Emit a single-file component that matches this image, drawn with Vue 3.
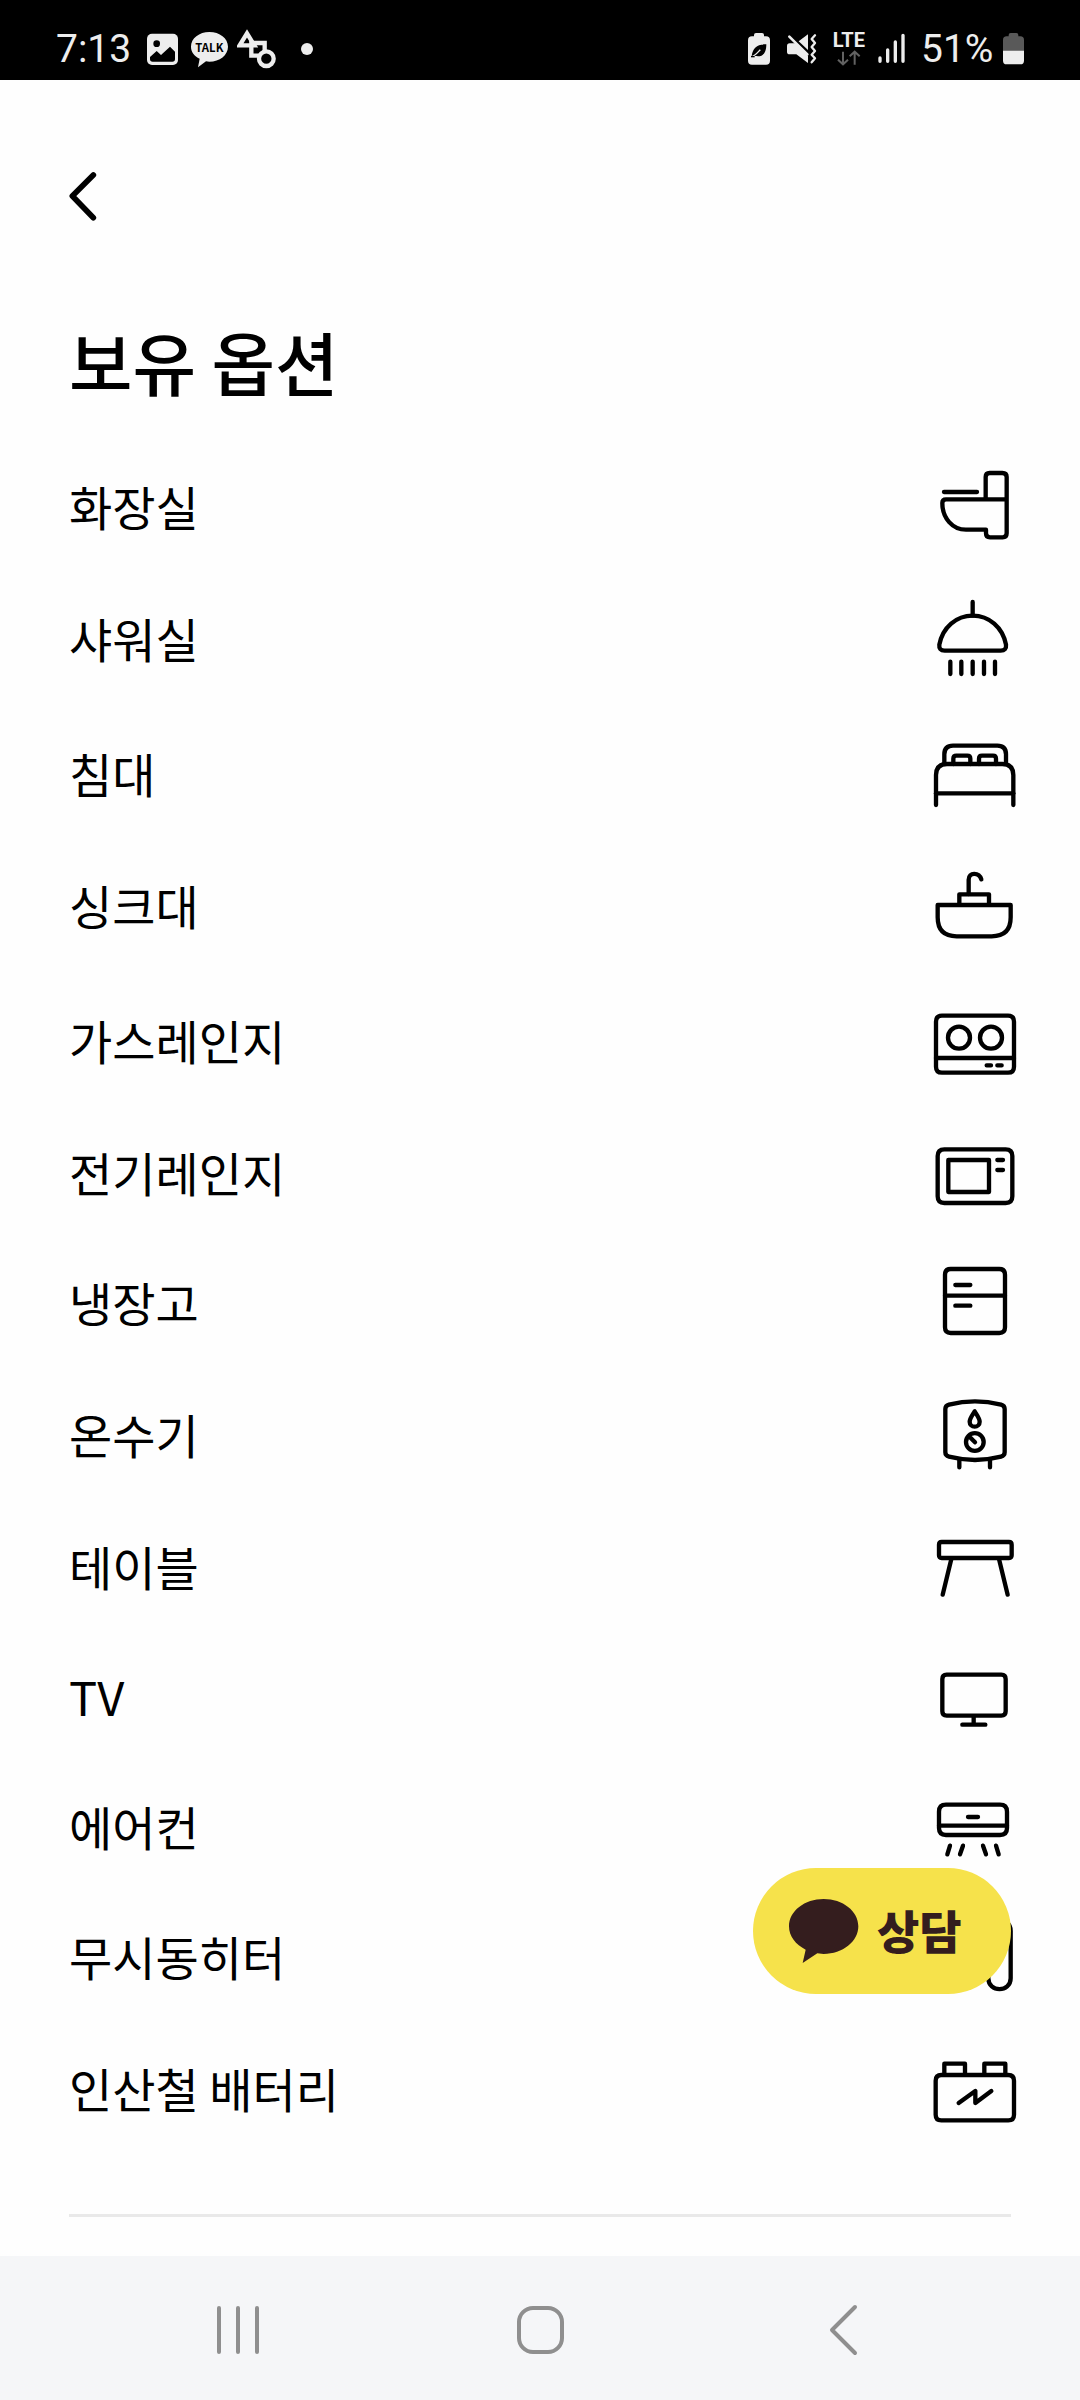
<script setup>
// Each icon is a 90x96 px window (3 drawing units per pixel); `x` and `y` are its viewBox origin.
const options = [
  { name: '화장실', x: 90, y: 60, spacing: 'tight', paths: [
    'M132 156H231',
    'M257 177V111Q257 99 269 99H307Q320 99 320 111V280Q320 292 308 292H270Q258 292 258 280V269H198C158 269 127 235 127 189Q127 178 138 178H320'
  ] },
  { name: '샤워실', x: 90, y: 456, spacing: 'normal', paths: [
    'M218 486V527',
    'M118 614C128 562 169 527 218 527S308 562 318 614Q320 632 302 632H134Q116 632 118 614Z',
    'M151 665V702M184 665V702M218 665V702M252 665V702M285 665V702'
  ] },
  { name: '침대', x: 90, y: 861, spacing: 'wide', paths: [
    'M133 971V943Q133 917 159 917H292Q318 917 318 943V971',
    'M108 1095V1005Q108 972 141 972H307Q340 972 340 1005V1095',
    'M108 1060H340',
    'M160 972V956Q160 947 169 947H202Q211 947 211 956V972M237 972V956Q237 947 246 947H279Q288 947 288 956V972'
  ] },
  { name: '싱크대', x: 90, y: 57, spacing: 'normal', paths: [
    'M206 162V119C206 96 237 96 244 118',
    'M178 194V163H267V194',
    'M113 195H332V232Q332 289 275 289H170Q113 289 113 232Z'
  ] },
  { name: '가스레인지', x: 90, y: 462, spacing: 'wide', paths: [
    'M126 527H324Q342 527 342 545V680Q342 698 324 698H126Q108 698 108 680V545Q108 527 126 527Z',
    'M108 654H342',
    'M144 593a33 33 0 1 0 66 0a33 33 0 1 0-66 0M240 593a33 33 0 1 0 66 0a33 33 0 1 0-66 0',
    'M260 676H273M292 676H305'
  ] },
  { name: '전기레인지', x: 90, y: 858, spacing: 'normal', paths: [
    'M133 928H317Q337 928 337 948V1069Q337 1089 317 1089H133Q113 1089 113 1069V948Q113 928 133 928Z',
    'M145 960H267V1056H145Z',
    'M292 960H309M292 990H309'
  ] },
  { name: '냉장고', x: 90, y: 48, spacing: 'tight', paths: [
    'M152 87H298Q315 87 315 104V262Q315 279 298 279H152Q135 279 135 262V104Q135 87 152 87Z',
    'M135 167H315M166 135H211M166 197H211'
  ] },
  { name: '온수기', x: 90, y: 444, spacing: 'normal', paths: [
    'M136 507Q136 497 147 494Q225 474 303 494Q314 497 314 507V637Q314 647 303 650Q225 670 147 650Q136 647 136 637Z',
    'M178 658V682M270 658V682',
    'M224 514C218 524 209 535 209 545A15 15 0 0 0 239 545C239 535 230 524 224 514Z',
    'M198 606a26 26 0 1 0 53 0a26 26 0 1 0-53 0M207 589L225 607'
  ] },
  { name: '테이블', x: 90, y: 840, spacing: 'normal', paths: [
    'M125 906H327Q335 906 335 914V946Q335 954 327 954H125Q117 954 117 946V914Q117 906 125 906Z',
    'M154 957L128 1064M297 957L323 1064'
  ] },
  { name: 'TV', x: 600, y: 30, spacing: 'tight', paths: [
    'M650 104H814Q827 104 827 117V214Q827 227 814 227H650Q637 227 637 214V117Q637 104 650 104Z',
    'M731 230V254M697 254H766'
  ] },
  { name: '에어컨', x: 600, y: 420, spacing: 'tight', paths: [
    'M648 494H810Q831 494 831 515V564Q831 585 810 585H648Q627 585 627 564V515Q627 494 648 494Z',
    'M627 557H831M714 531H744',
    'M660 617L652 643M699 617L690 643M759 617L768 643M798 617L806 643'
  ] },
  { name: '무시동히터', x: 600, y: 810, spacing: 'tight', paths: [
    'M775 1015V873C775 829 842 829 842 873V1015C842 1058 775 1058 775 1015Z'
  ] },
  { name: '인산철 배터리', x: 600, y: 1206, spacing: 'normal', paths: [
    'M634 1305H835Q852 1305 852 1322V1424Q852 1441 835 1441H634Q617 1441 617 1424V1322Q617 1305 634 1305Z',
    'M643 1303V1271H705V1303M763 1303V1271H826V1303',
    'M686 1389L736 1353V1389L784 1353'
  ] }
]
</script>

<template>
  <div class="screen">
    <div class="status">
      <div class="status-side">
        <span class="clock">7:13</span>
        <svg width="44" height="42" viewBox="441 84 132 126" aria-hidden="true">
          <rect x="441" y="101" width="93" height="94" rx="15" fill="#ededed" />
          <circle cx="470" cy="131" r="10" fill="#000" />
          <path d="M450 171L470 153L483 165L510 140L525 155V177Q525 185 517 185H458Q450 185 450 177Z" fill="#000" />
        </svg>
        <svg width="46" height="42" viewBox="573 84 138 126" aria-hidden="true">
          <path d="M628 96C659 96 684 115 684 140S659 185 628 185L618 184L594 202L599 176C583 168 573 156 573 140C573 115 598 96 628 96Z" fill="#ededed" />
          <text class="talk" x="628" y="155" text-anchor="middle">TALK</text>
        </svg>
        <svg width="64" height="42" viewBox="711 84 192 126" aria-hidden="true">
          <g fill="none" stroke="#ededed" stroke-width="13">
            <path d="M741 100L719 136H763Z" />
            <path d="M754 129H794V167H754Z" />
            <circle cx="799" cy="176" r="22" fill="#000" />
          </g>
        </svg>
        <svg width="12" height="42" viewBox="903 84 36 126" aria-hidden="true">
          <circle cx="921" cy="147" r="18" fill="#ededed" />
        </svg>
      </div>
      <div class="status-side">
        <svg width="39" height="42" viewBox="87 84 117 126" aria-hidden="true">
          <path d="M105 109V105Q105 99 111 99H129Q135 99 135 105V109H141Q153 109 153 121V182Q153 194 141 194H99Q87 194 87 182V121Q87 109 99 109Z" fill="#ededed" />
          <path d="M98 168C102 141 115 133 142 133C142 160 132 171 110 168Z" fill="#000" />
          <path d="M96 170C108 169 115 158 124 149" fill="none" stroke="#ededed" stroke-width="4" />
          <path d="M96 170H107" stroke="#000" stroke-width="4" />
        </svg>
        <svg width="46" height="42" viewBox="204 84 138 126" aria-hidden="true">
          <path d="M204 138Q204 130 212 130H229L267 167V189L232 163H212Q204 163 204 155ZM239 124L267 103V150Z" fill="#ededed" />
          <path d="M211 110L265 163" stroke="#ededed" stroke-width="8" stroke-linecap="round" />
          <path d="M288 106L278 117L288 129L278 141L288 153L278 164L288 175L278 187" fill="none" stroke="#ededed" stroke-width="7" stroke-linecap="round" stroke-linejoin="round" />
        </svg>
        <svg width="45" height="42" viewBox="342 84 135 126" aria-hidden="true">
          <text class="lte" x="341" y="142">LTE</text>
          <path d="M372 155V193M357 179L372 193L387 179M407 194V156M392 169L407 155L422 169" fill="none" stroke="#626262" stroke-width="6" />
        </svg>
        <svg width="43" height="42" viewBox="477 84 129 126" aria-hidden="true">
          <path d="M483 174V184M506 150V184M529 126V184M552 106V184" stroke="#ededed" stroke-width="10" stroke-linecap="round" />
        </svg>
        <span class="percent">51%</span>
        <svg width="21" height="42" viewBox="849 84 63 126" aria-hidden="true">
          <path d="M866 109V105Q866 99 872 99H889Q895 99 895 105V109H901Q912 109 912 120V153H849V120Q849 109 860 109Z" fill="#595959" />
          <path d="M849 152H912V182Q912 193 901 193H860Q849 193 849 182Z" fill="#ededed" />
        </svg>
      </div>
    </div>

    <main class="content">
      <button class="back" type="button" aria-label="뒤로">
        <svg width="30" height="60" viewBox="207 497 90 180" aria-hidden="true">
          <path d="M280 524L217 587L280 652" fill="none" stroke="#000" stroke-width="17" stroke-linecap="round" stroke-linejoin="round" />
        </svg>
      </button>
      <h1>보유 옵션</h1>
      <ul class="options">
        <li v-for="option in options" :key="option.name" :class="['option', option.spacing]">
          <span class="name">{{ option.name }}</span>
          <svg class="icon" width="90" height="96" :viewBox="`${option.x} ${option.y} 270 288`" aria-hidden="true">
            <path v-for="d in option.paths" :key="d" :d="d" />
          </svg>
        </li>
      </ul>
      <hr />
    </main>

    <button class="chat" type="button">
      <svg width="70" height="64" viewBox="177 777 210 192" aria-hidden="true">
        <path d="M281 777C338 777 385 813 385 859S338 942 281 942L262 940L218 969L227 929C197 914 177 889 177 859C177 813 224 777 281 777Z" fill="#341d1e" />
      </svg>
      <span class="chat-label">상담</span>
    </button>

    <nav class="system-nav">
      <button type="button" aria-label="최근 앱">
        <svg width="52" height="52" viewBox="0 0 52 52" aria-hidden="true">
          <path d="M7 4V48M26 4V48M45 4V48" />
        </svg>
      </button>
      <button type="button" aria-label="홈">
        <svg width="52" height="52" viewBox="0 0 52 52" aria-hidden="true">
          <rect x="5" y="4" width="43" height="44" rx="14" />
        </svg>
      </button>
      <button type="button" aria-label="뒤로">
        <svg width="52" height="52" viewBox="0 0 52 52" aria-hidden="true">
          <path d="M39 3L16 26L39 49" />
        </svg>
      </button>
    </nav>
  </div>
</template>

<style>
body {
  margin: 0;
  background: #fefefe;
}
</style>

<style scoped>
.screen {
  display: flex;
  flex-direction: column;
  min-height: 100vh;
  background: #fefefe;
  color: #000;
  font-family: "Noto Sans CJK KR", sans-serif;
}
button {
  padding: 0;
  border: 0;
  background: none;
  color: inherit;
  font: inherit;
  cursor: pointer;
}
svg {
  display: block;
  flex: none;
}
.status {
  display: flex;
  justify-content: space-between;
  box-sizing: border-box;
  height: 80px;
  padding: 28px 56px 0;
  background: #000;
  color: #ededed;
  font-family: Roboto, sans-serif;
  font-size: 39px;
  line-height: 42px;
}
.status-side {
  display: flex;
}
.clock {
  width: 91px;
}
.percent {
  width: 82px;
}
.talk {
  font-family: "Noto Sans CJK KR", sans-serif;
  font-size: 34px;
  font-weight: 700;
}
.lte {
  fill: #ededed;
  font-size: 60px;
  font-weight: 700;
}
.content {
  padding: 86px 69px 38px;
}
.back {
  display: block;
}
h1 {
  margin: 85px 0 32px;
  font-size: 69px;
  font-weight: 500;
  line-height: 100px;
}
.options {
  margin: 0;
  padding: 0;
  list-style: none;
}
.option {
  display: flex;
  align-items: center;
  justify-content: space-between;
  height: 130px;
  margin-right: -9px;
  font-size: 47px;
  line-height: 70px;
}
.name {
  padding-bottom: 4px;
}
.normal {
  margin-top: 2px;
}
.wide {
  margin-top: 5px;
}
.icon {
  fill: none;
  stroke: #000;
  stroke-width: 13;
  stroke-linecap: round;
  stroke-linejoin: round;
}
hr {
  height: 3px;
  margin: 59px 0 0;
  border: 0;
  background: #e9e9e9;
}
.chat {
  position: fixed;
  right: 69px;
  bottom: 406px;
  display: flex;
  align-items: center;
  gap: 18px;
  width: 258px;
  height: 126px;
  padding-left: 36px;
  border-radius: 63px;
  background: #f6e24b;
  color: #341d1e;
  font-size: 46px;
  font-weight: 900;
}
.chat-label {
  padding-bottom: 4px;
}
.system-nav {
  display: flex;
  justify-content: space-between;
  align-items: center;
  box-sizing: border-box;
  height: 144px;
  margin-top: auto;
  padding: 4px 212px 0;
  background: #f5f6f8;
}
.system-nav svg {
  fill: none;
  stroke: #8f8f8f;
  stroke-width: 4;
  stroke-linecap: round;
  stroke-linejoin: round;
}
</style>
